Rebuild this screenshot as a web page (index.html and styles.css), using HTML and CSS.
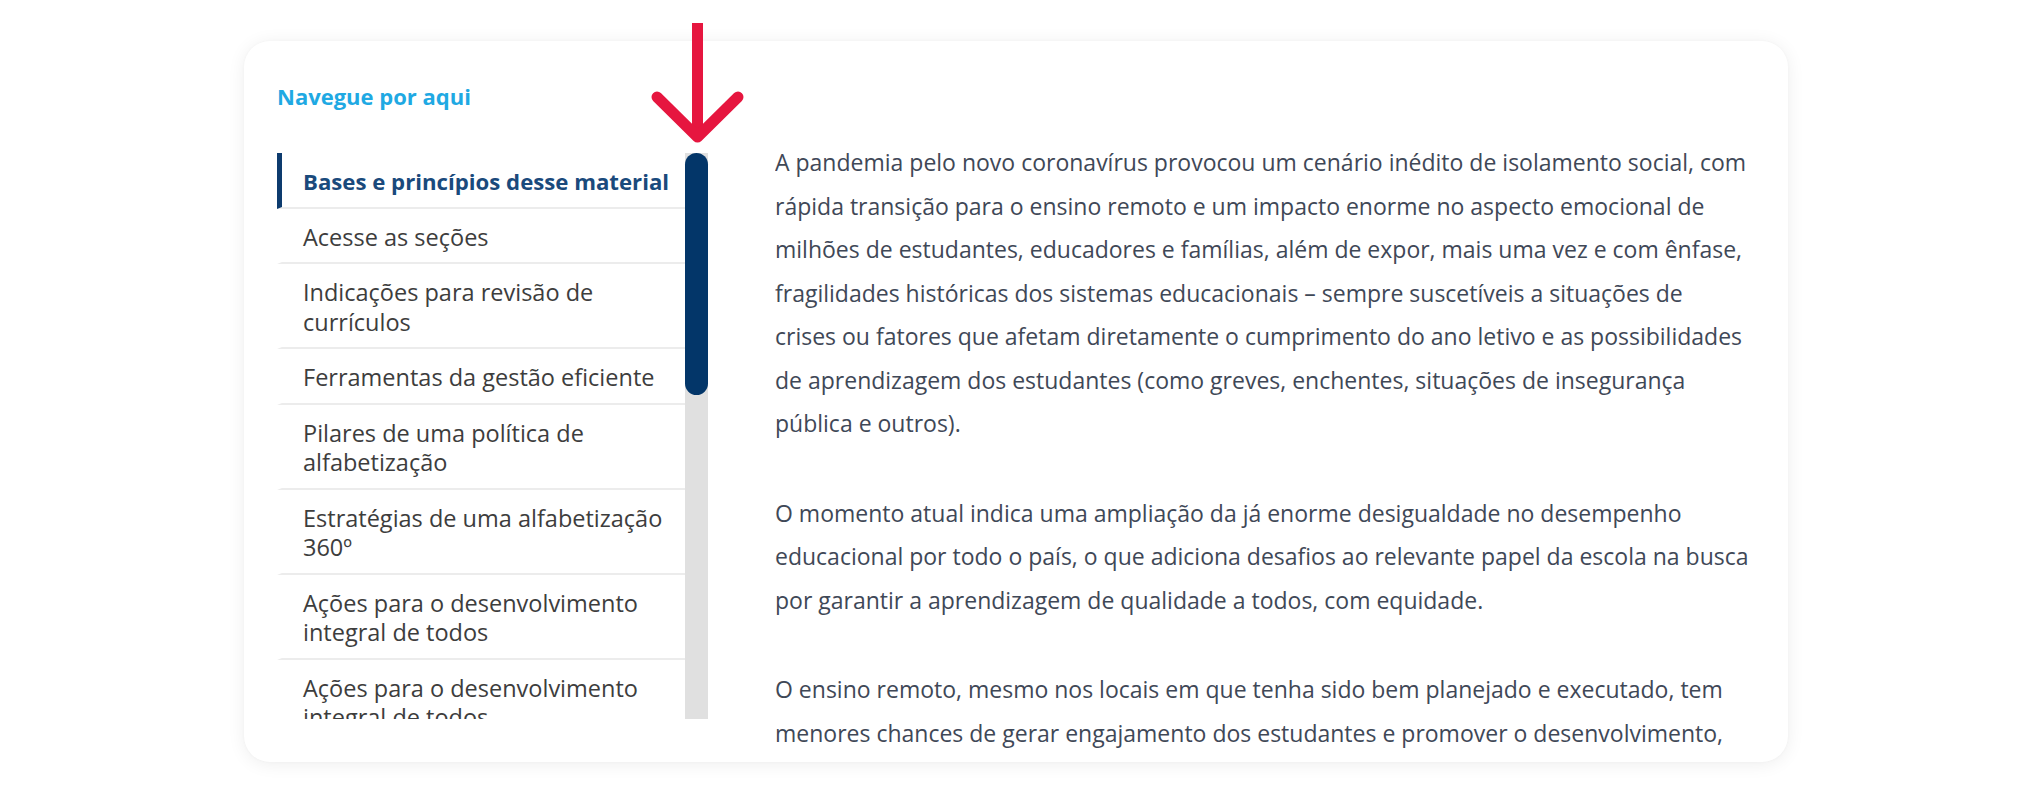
FILE: index.html
```html
<!DOCTYPE html>
<html lang="pt-BR">
<head>
<meta charset="utf-8">
<title>Navegue por aqui</title>
<link rel="stylesheet" href="styles.css">
</head>
<body>
<div class="page">
  <section class="card">
    <aside class="sidebar">
      <h2 class="sidebar-title">Navegue por aqui</h2>
      <div class="nav-wrap">
        <ul class="nav-list">
          <li class="nav-item active">Bases e princípios desse material</li>
          <li class="nav-item">Acesse as seções</li>
          <li class="nav-item">Indicações para revisão de<br>currículos</li>
          <li class="nav-item">Ferramentas da gestão eficiente</li>
          <li class="nav-item">Pilares de uma política de<br>alfabetização</li>
          <li class="nav-item">Estratégias de uma alfabetização<br>360º</li>
          <li class="nav-item">Ações para o desenvolvimento<br>integral de todos</li>
          <li class="nav-item">Ações para o desenvolvimento<br>integral de todos</li>
        </ul>
        <div class="scroll-track"><div class="scroll-thumb"></div></div>
      </div>
    </aside>
    <article class="content">
      <p>A pandemia pelo novo coronavírus provocou um cenário inédito de isolamento social, com<br>rápida transição para o ensino remoto e um impacto enorme no aspecto emocional de<br>milhões de estudantes, educadores e famílias, além de expor, mais uma vez e com ênfase,<br>fragilidades históricas dos sistemas educacionais – sempre suscetíveis a situações de<br>crises ou fatores que afetam diretamente o cumprimento do ano letivo e as possibilidades<br>de aprendizagem dos estudantes (como greves, enchentes, situações de insegurança<br>pública e outros).</p>
      <p>O momento atual indica uma ampliação da já enorme desigualdade no desempenho<br>educacional por todo o país, o que adiciona desafios ao relevante papel da escola na busca<br>por garantir a aprendizagem de qualidade a todos, com equidade.</p>
      <p>O ensino remoto, mesmo nos locais em que tenha sido bem planejado e executado, tem<br>menores chances de gerar engajamento dos estudantes e promover o desenvolvimento,</p>
    </article>
  </section>
</div>
<svg class="pointer-arrow" width="100" height="130" viewBox="0 0 100 130" aria-hidden="true">
  <line x1="47.5" y1="5" x2="47.5" y2="118" stroke="#e6163f" stroke-width="11" stroke-linecap="butt"/>
  <polyline points="7,79 47.5,119 88,79" fill="none" stroke="#e6163f" stroke-width="11" stroke-linecap="round" stroke-linejoin="round"/>
</svg>
</body>
</html>
```
FILE: styles.css
```css
html, body {
  margin: 0;
  padding: 0;
  background: #ffffff;
}

body {
  font-family: "Open Sans", "Noto Sans", sans-serif;
  position: relative;
  min-height: 804px;
}

.page {
  padding: 41px 0 0 244px;
}

.card {
  box-sizing: border-box;
  width: 1544px;
  height: 721px;
  background: #ffffff;
  border-radius: 26px;
  box-shadow: 0 2px 18px rgba(0, 0, 0, 0.07), 0 0 3px rgba(0, 0, 0, 0.03);
  display: flex;
  align-items: flex-start;
  padding: 41px 33px 0 33px;
  overflow: hidden;
}

.sidebar {
  flex: none;
  width: 431px;
  display: flex;
  flex-direction: column;
}

.sidebar-title {
  margin: 0;
  font-size: 22px;
  line-height: 28px;
  font-weight: 700;
  color: #1fa9e3;
}

.nav-wrap {
  margin-top: 43px;
  height: 566px;
  display: flex;
}

.nav-list {
  flex: none;
  width: 408px;
  height: 100%;
  margin: 0;
  padding: 0;
  list-style: none;
  overflow: hidden;
}

.nav-item {
  padding: 14px 8px 10px 21px;
  border-left: 5px solid transparent;
  border-bottom: 2px solid #ececec;
  font-size: 23.5px;
  line-height: 29.5px;
  color: #3d3d3d;
  white-space: nowrap;
}

.nav-item.active {
  border-left-color: #0d3b6e;
  color: #1a4a7c;
  font-size: 22.2px;
  font-weight: 700;
}

.scroll-track {
  flex: none;
  width: 23px;
  height: 100%;
  background: #e0e0e0;
}

.scroll-thumb {
  height: 242px;
  border-radius: 12px;
  background: #033669;
}

.content {
  flex: none;
  width: 990px;
  height: 673px;
  margin-left: 67px;
  padding-top: 59px;
  box-sizing: border-box;
  overflow: hidden;
}

.content p {
  margin: 0 0 46px;
  font-size: 23px;
  line-height: 43.5px;
  color: #3f4857;
  white-space: nowrap;
}

.pointer-arrow {
  position: absolute;
  left: 650px;
  top: 18px;
}
```
